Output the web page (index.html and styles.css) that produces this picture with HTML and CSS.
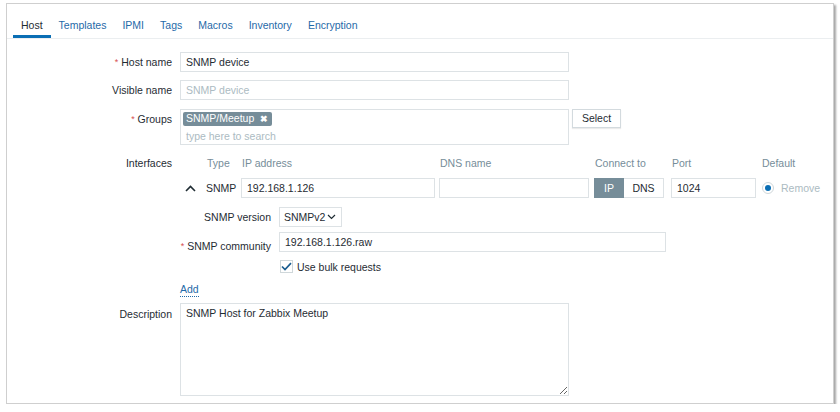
FILE: index.html
```html
<!DOCTYPE html>
<html lang="en">
<head>
<meta charset="utf-8">
<title>Host</title>
<link rel="stylesheet" href="styles.css">
</head>
<body>
<div class="panel">
  <ul class="tabs">
    <li class="tab active">Host</li>
    <li class="tab">Templates</li>
    <li class="tab">IPMI</li>
    <li class="tab">Tags</li>
    <li class="tab">Macros</li>
    <li class="tab">Inventory</li>
    <li class="tab">Encryption</li>
  </ul>

  <div class="form">
    <div class="row r-host">
      <div class="lbl"><span class="req">*</span> Host name</div>
      <div class="field"><div class="input w389">SNMP device</div></div>
    </div>
    <div class="row r-visible">
      <div class="lbl">Visible name</div>
      <div class="field"><div class="input w389 placeholder">SNMP device</div></div>
    </div>
    <div class="row r-groups">
      <div class="lbl"><span class="req">*</span> Groups</div>
      <div class="field groups">
        <div class="multiselect">
          <span class="chip">SNMP/Meetup <span class="chip-x">&#10006;</span></span>
          <div class="ms-placeholder">type here to search</div>
        </div>
        <div class="btn">Select</div>
      </div>
    </div>
    <div class="row r-interfaces">
      <div class="lbl lbl-if">Interfaces</div>
      <div class="field">
        <div class="if-grid">
          <div></div>
          <div class="th">Type</div>
          <div class="th">IP address</div>
          <div class="th">DNS name</div>
          <div class="th">Connect to</div>
          <div class="th">Port</div>
          <div class="th">Default</div>

          <div class="caret">
            <svg width="11" height="7" viewBox="0 0 11 7"><path d="M1 6 L5.5 1.5 L10 6" fill="none" stroke="#1f2c33" stroke-width="1.6"/></svg>
          </div>
          <div class="td-type">SNMP</div>
          <div><div class="input w194">192.168.1.126</div></div>
          <div><div class="input w150"></div></div>
          <div class="toggle"><span class="tg tg-on">IP</span><span class="tg tg-off">DNS</span></div>
          <div><div class="input w85">1024</div></div>
          <div class="default-cell"><span class="radio"><span class="radio-dot"></span></span><span class="remove">Remove</span></div>
        </div>

        <div class="details">
          <div class="dlbl">SNMP version</div>
          <div class="dfield"><div class="select">SNMPv2<svg class="chev" width="9" height="6" viewBox="0 0 9 6"><path d="M1 1 L4.5 4.5 L8 1" fill="none" stroke="#1f2c33" stroke-width="1.2"/></svg></div></div>
          <div class="dlbl"><span class="req">*</span> SNMP community</div>
          <div class="dfield"><div class="input w387">192.168.1.126.raw</div></div>
          <div></div>
          <div class="dfield chk-row"><span class="checkbox"><svg width="11" height="9" viewBox="0 0 11 9"><path d="M1 4.5 L4 7.5 L10 1.2" fill="none" stroke="#1b5e91" stroke-width="1.7"/></svg></span><span class="chk-label">Use bulk requests</span></div>
        </div>
      </div>
    </div>
    <div class="row r-add">
      <div class="lbl"></div>
      <div class="field"><span class="link">Add</span></div>
    </div>
    <div class="row r-desc">
      <div class="lbl lbl-desc">Description</div>
      <div class="field"><textarea class="textarea">SNMP Host for Zabbix Meetup</textarea></div>
    </div>
  </div>
</div>
</body>
</html>
```

FILE: styles.css
```css
* { box-sizing: border-box; }
html, body { margin: 0; padding: 0; background: #ffffff; }
body {
  font-family: "Liberation Sans", Arial, sans-serif;
  font-size: 10.5px;
  color: #1f2c33;
}
.panel {
  margin: 3px 0 0 6px;
  width: 828px;
  height: 401px;
  background: #ffffff;
  border: 1px solid #cfcfcf;
  box-shadow: 2px 2px 2px rgba(0, 0, 0, 0.35);
}
.tabs {
  list-style: none;
  margin: 0;
  padding: 0 0 0 6px;
  display: flex;
  border-bottom: 1px solid #ebeef0;
}
.tab {
  padding: 11px 8px 0 8px;
  line-height: 20px;
  height: 34px;
  font-size: 10.5px;
  color: #1f6aa8;
  border-bottom: 3px solid transparent;
}
.tab.active {
  color: #1f2c33;
  border-bottom-color: #0a6eb4;
}
.form { margin-top: 13px; }
.row {
  display: grid;
  grid-template-columns: 165px 1fr;
  column-gap: 8px;
  align-items: start;
}
.lbl {
  text-align: right;
  line-height: 20px;
  white-space: nowrap;
}
.req { color: #d64e4e; font-size: 9px; vertical-align: 1px; }
.r-host { margin-bottom: 8px; }
.r-visible { margin-bottom: 9px; }
.r-groups { margin-bottom: 10px; }
.r-interfaces { margin-bottom: 9px; }
.r-add { margin-bottom: 6px; }
.lbl-if { line-height: 16px; }
.lbl-desc { padding-top: 1px; }

.input {
  height: 20px;
  line-height: 18px;
  border: 1px solid #dde2e5;
  background: #fff;
  padding: 0 5px;
  white-space: nowrap;
  overflow: hidden;
}
.placeholder { color: #acbbc2; }
.w389 { width: 389px; }
.w194 { width: 194px; }
.w150 { width: 150px; }
.w85 { width: 85px; }
.w387 { width: 387px; }

.groups { display: flex; align-items: flex-start; }
.multiselect {
  width: 389px;
  height: 36px;
  border: 1px solid #dde2e5;
  padding: 2px 0 0 2px;
}
.chip {
  display: inline-block;
  background: #768d99;
  color: #fff;
  line-height: 13px;
  padding: 0 4px 0 3px;
  border-radius: 2px;
}
.chip-x { font-size: 9px; margin-left: 3px; font-weight: bold; }
.ms-placeholder {
  color: #acbbc2;
  padding-left: 3px;
  line-height: 16px;
  margin-top: 2px;
}
.btn {
  margin-left: 3px;
  width: 49px;
  height: 19px;
  line-height: 17px;
  text-align: center;
  border: 1px solid #d3dade;
  background: #fff;
  box-shadow: 0 1px 1px rgba(0, 0, 0, 0.08);
}

.if-grid {
  display: grid;
  grid-template-columns: 26px 35px 198px 155px 77px 90px auto;
  grid-template-rows: 16px 20px;
  row-gap: 7px;
  align-items: center;
}
.th { color: #768d99; line-height: 16px; padding-left: 1px; }
.caret { display: flex; align-items: center; padding-left: 5px; }
.td-type { line-height: 20px; }
.toggle { display: flex; width: 70px; height: 20px; }
.tg { line-height: 20px; text-align: center; }
.tg-on { width: 30px; background: #768d99; color: #fff; }
.tg-off { width: 40px; border: 1px solid #dde2e5; border-left: 0; line-height: 18px; }
.default-cell { display: flex; align-items: center; }
.radio {
  width: 12px; height: 12px;
  margin-left: 1px;
  border: 1px solid #cfd7da;
  border-radius: 50%;
  display: flex; align-items: center; justify-content: center;
}
.radio-dot { width: 6px; height: 6px; border-radius: 50%; background: #0a6eb4; }
.remove { color: #acbbc2; margin-left: 7px; }

.details {
  display: grid;
  grid-template-columns: 91px 1fr;
  column-gap: 8px;
  margin-top: 9px;
  align-items: center;
}
.dlbl { text-align: right; line-height: 20px; white-space: nowrap; }
.dlbl:nth-of-type(1) { margin-bottom: 5px; }
.details > :nth-child(2) { margin-bottom: 5px; }
.details > :nth-child(4) { margin-bottom: 8px; }
.select {
  width: 63px;
  height: 20px;
  border: 1px solid #dde2e5;
  line-height: 18px;
  padding-left: 4px;
  display: flex;
  align-items: center;
  justify-content: space-between;
  padding-right: 5px;
}
.chev { display: block; }
.chk-row { display: flex; align-items: center; height: 13px; padding-left: 1px; }
.checkbox {
  width: 13px; height: 13px;
  border: 1px solid #cfd7da;
  display: flex; align-items: center; justify-content: center;
}
.chk-label { margin-left: 4px; }

.link {
  color: #1f6aa8;
  line-height: 14px;
  display: inline-block;
  border-bottom: 1px dotted #1f6aa8;
}

.textarea {
  display: block;
  width: 389px;
  height: 93px;
  border: 1px solid #dde2e5;
  padding: 3px 5px;
  font-family: "Liberation Sans", Arial, sans-serif;
  font-size: 10.5px;
  color: #1f2c33;
  margin: 0;
  resize: both;
}
```
